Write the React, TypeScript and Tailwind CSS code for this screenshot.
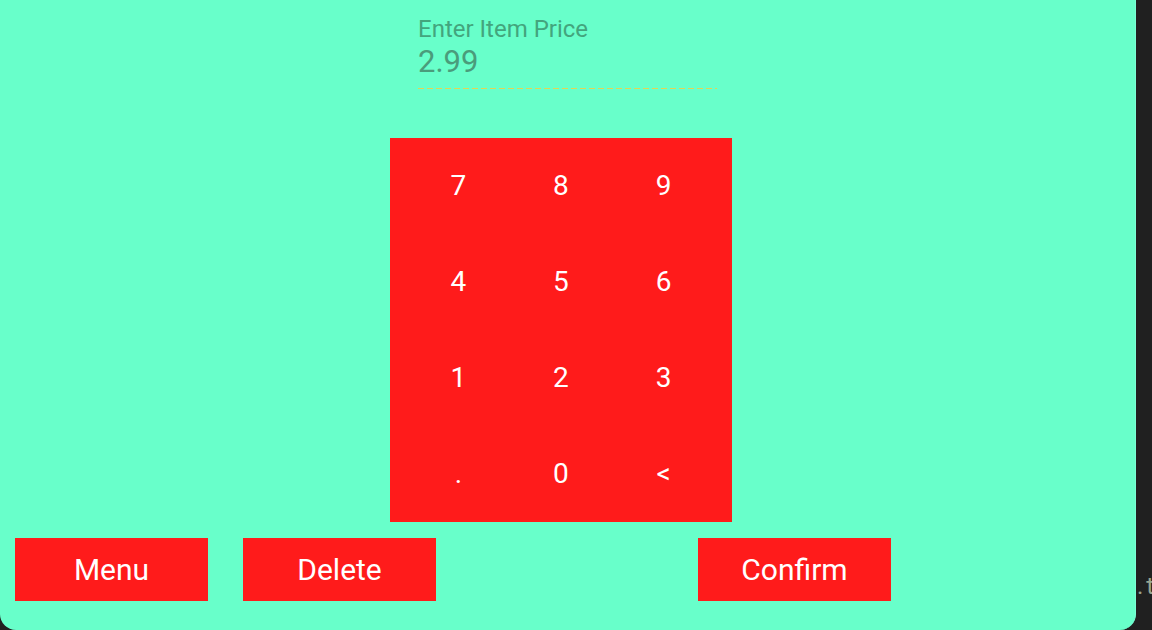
const keys = ['7', '8', '9', '4', '5', '6', '1', '2', '3', '.', '0', '<']

export default function App() {
  return (
    <div className="flex h-[630px] w-[1152px] overflow-hidden bg-[#202020] font-['Roboto',sans-serif]">
      <div className="flex h-[630px] w-[1136px] shrink-0 flex-col rounded-b-[16px] border-r border-[#7affd6] bg-[#68ffca]">
        <div className="ml-[418px] w-[299px] pt-[15px]">
          <p className="text-[24px] leading-[29px] text-[#43a57d]">Enter Item Price</p>
          <p className="text-[31px] leading-[36px] text-[#4a9c7b]">2.99</p>
          <div className="mt-[8px] h-[1px] bg-[repeating-linear-gradient(90deg,#e4d454_0_6px,transparent_6px_9px)]" />
        </div>

        <div className="ml-[390px] mt-[49px] grid h-[384px] w-[342px] grid-cols-3 grid-rows-4 bg-[#ff1b1b] px-[17px]">
          {keys.map((k) => (
            <button
              key={k}
              type="button"
              className="flex items-center justify-center text-[28px] leading-none text-white"
            >
              {k}
            </button>
          ))}
        </div>

        <div className="mt-[16px] flex">
          <button
            type="button"
            className="ml-[15px] h-[63px] w-[193px] bg-[#ff1b1b] text-[30px] text-white"
          >
            Menu
          </button>
          <button
            type="button"
            className="ml-[35px] h-[63px] w-[193px] bg-[#ff1b1b] text-[30px] text-white"
          >
            Delete
          </button>
          <button
            type="button"
            className="ml-[262px] h-[63px] w-[193px] bg-[#ff1b1b] text-[30px] text-white"
          >
            Confirm
          </button>
        </div>
      </div>
      <div className="flex flex-1 whitespace-nowrap pl-[1px] pt-[568px] text-[24px] text-[#9aa58f]">
        <span>.</span>
        <span className="ml-[3px]">t</span>
      </div>
    </div>
  )
}
